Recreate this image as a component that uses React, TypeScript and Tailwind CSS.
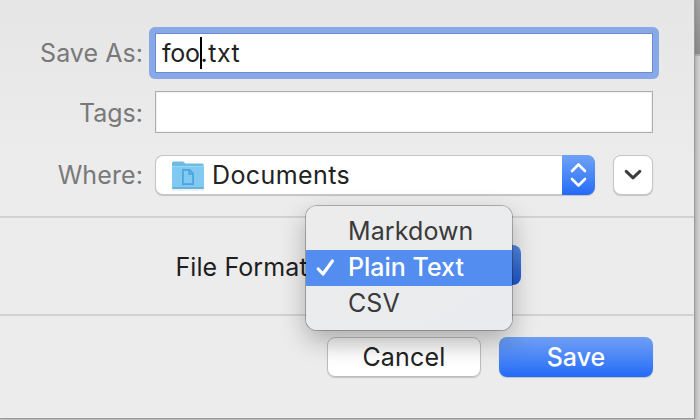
import { clsx } from "clsx"

const formats = [
  { name: "Markdown", tracking: "tracking-[0.1px]" },
  { name: "Plain Text", tracking: "tracking-[0px]" },
  { name: "CSV", tracking: "tracking-[0.1px]" },
]

function FolderIcon() {
  return (
    <svg width="32" height="30" viewBox="0 0 32 30" className="mt-[2px] shrink-0">
      <path d="M0 28.5h32v1H0z" fill="#000" opacity="0.12" />
      <path d="M0 2.2Q0 0.4 1.6 0.4H10.5Q11.6 0.4 12.4 1.6L13.2 2.6H30.4Q31.6 2.6 31.6 4V8H0Z" fill="#6dbbe2" />
      <path d="M0 5.2H32V26.6Q32 28 30.6 28H1.4Q0 28 0 26.6Z" fill="#82c9f2" />
      <path d="M0 5.2H32V6H0Z" fill="#a2daf6" />
      <path d="M0 26H32V26.8Q32 28 30.8 28H1.2Q0 28 0 26.8Z" fill="#67b3dc" />
      <path d="M10.9 8.9H17.6L21.1 12.6V23.1H10.9Z M17.2 9V13H21" fill="none" stroke="#4ba3e0" strokeWidth="1.7" />
    </svg>
  )
}

function CheckIcon() {
  return (
    <svg width="20" height="20" viewBox="0 0 20 20" fill="none" stroke="#fff" strokeWidth="3.2" strokeLinecap="round" strokeLinejoin="round">
      <path d="M3.2 11L8 16L17.4 3" />
    </svg>
  )
}

function FormatMenu() {
  return (
    <div className="absolute left-[306px] top-[206px] z-10 w-[206px] rounded-[11px] bg-linear-to-br from-[#ececec] to-[#e9ebee] py-2 shadow-[0_0_0_1px_rgba(0,0,0,0.25),0_10px_26px_rgba(0,0,0,0.28)]">
      {formats.map((format) => {
        const selected = format.name === "Plain Text"
        return (
          <div
            key={format.name}
            className={clsx("flex h-9 items-center", selected ? "bg-[#548df0] font-medium text-white" : "text-[#3a3a3a]")}
          >
            <div className="flex w-[42px] shrink-0 pl-[9px]">{selected && <CheckIcon />}</div>
            <span className={clsx("pb-[2px]", format.tracking)}>{format.name}</span>
          </div>
        )
      })}
    </div>
  )
}

export default function App() {
  return (
    <div className="flex h-[420px] w-[700px] overflow-hidden bg-[#c9c9c9] font-['Inter',sans-serif] text-[25px] leading-9 whitespace-nowrap text-[#222]">
      <div className="relative flex h-[418px] w-[694px] shrink-0 flex-col bg-linear-to-b from-[#e6e6e6] to-[#ececec] to-40% shadow-[0_0_0_1px_#9b9b9b,0_0_4px_rgba(0,0,0,0.3)]">
        {/* Name, tags and location */}
        <div className="flex h-[216px] flex-col pt-[27px]">
          <div className="flex h-[52px] items-center">
            <label className="w-[143px] text-right tracking-[0.05px] text-[#797979]">Save As:</label>
            <div className="ml-[6px] w-[510px] rounded-[6px] bg-[#88a8e8] p-[6px]">
              <div className="flex h-10 items-center border border-[#6b8cd2] bg-white pl-[6px]">
                <span className="tracking-[-0.2px]">foo</span>
                <span className="-mr-[1.5px] h-8 w-[2px] bg-black" />
                <span className="tracking-[0.55px]">.txt</span>
              </div>
            </div>
          </div>
          <div className="mt-3 flex h-[42px] items-center">
            <label className="w-[143px] pt-[2px] text-right text-[#797979]">Tags:</label>
            <div className="ml-3 h-[42px] w-[498px] border border-[#adadad] bg-white shadow-[inset_0_0_0_1px_#f2f2f2]" />
          </div>
          <div className="mt-[22px] flex h-10 items-center">
            <label className="w-[143px] text-right tracking-[0.1px] text-[#797979]">Where:</label>
            <div className="ml-3 w-[440px] rounded-[8px] bg-[#c6c6c6] p-[1px] shadow-[0_1px_1px_rgba(0,0,0,0.18)]">
              <div className="flex h-[38px] items-center rounded-[7px] bg-white pl-[16px]">
                <FolderIcon />
                <span className="ml-2 tracking-[0.4px]">Documents</span>
                <div className="-mr-[1px] ml-auto flex h-10 w-[33px] items-center justify-center rounded-r-[8px] bg-linear-to-b from-[#6fa1f6] to-[#236af8]">
                  <svg width="17" height="26" viewBox="0 0 17 26" fill="none" stroke="#fff" strokeWidth="2.6" strokeLinecap="round" strokeLinejoin="round">
                    <path d="M2 9L8.5 2.5L15 9M2 17L8.5 23.5L15 17" />
                  </svg>
                </div>
              </div>
            </div>
            <button className="ml-[18px] flex h-10 w-10 items-center justify-center rounded-[8px] border border-[#c6c6c6] bg-white shadow-[0_1px_1px_rgba(0,0,0,0.18)]">
              <svg width="18" height="12" viewBox="0 0 18 12" fill="none" stroke="#3c3c3c" strokeWidth="3" strokeLinecap="round" strokeLinejoin="round">
                <path d="M2.2 2.4L9 8.8L15.8 2.4" />
              </svg>
            </button>
          </div>
        </div>

        {/* File format row, the menu covers most of its popup button */}
        <div className="flex h-[100px] items-center border-y-2 border-[#d2d2d2]">
          <label className="w-[315px] pt-[2px] text-right tracking-[0.1px] text-[#1e1e1e]">File Format:</label>
          <div className="ml-3 -mt-[2px] flex h-10 w-[194px] justify-end overflow-hidden rounded-[8px] bg-white">
            <div className="h-10 w-[33px] bg-linear-to-b from-[#5485dc] to-[#1c55cc]" />
          </div>
        </div>

        <div className="flex justify-end gap-[18px] pt-[21px] pr-[41px]">
          <button className="h-10 w-[154px] rounded-[8px] border border-[#bdbdbd] bg-linear-to-b from-[#f2f2f2] to-white to-60% tracking-[0.2px] shadow-[0_1px_1px_rgba(0,0,0,0.18)]">
            Cancel
          </button>
          <button className="h-10 w-[154px] rounded-[8px] bg-linear-to-b from-[#6f9ff4] to-[#236af8] font-medium text-white shadow-[0_1px_1px_rgba(0,0,0,0.18)]">
            Save
          </button>
        </div>

        <FormatMenu />
      </div>

      {/* Window behind the sheet */}
      <div className="flex w-[6px] flex-col">
        <div className="h-[54px] bg-linear-to-b from-[#a0a0a0] to-[#8c8c8c]" />
        <div className="h-[2px] bg-[#acacac]" />
        <div className="flex-1 bg-linear-to-r from-[#bdbdbd] to-[#d2d2d2]" />
      </div>
    </div>
  )
}
